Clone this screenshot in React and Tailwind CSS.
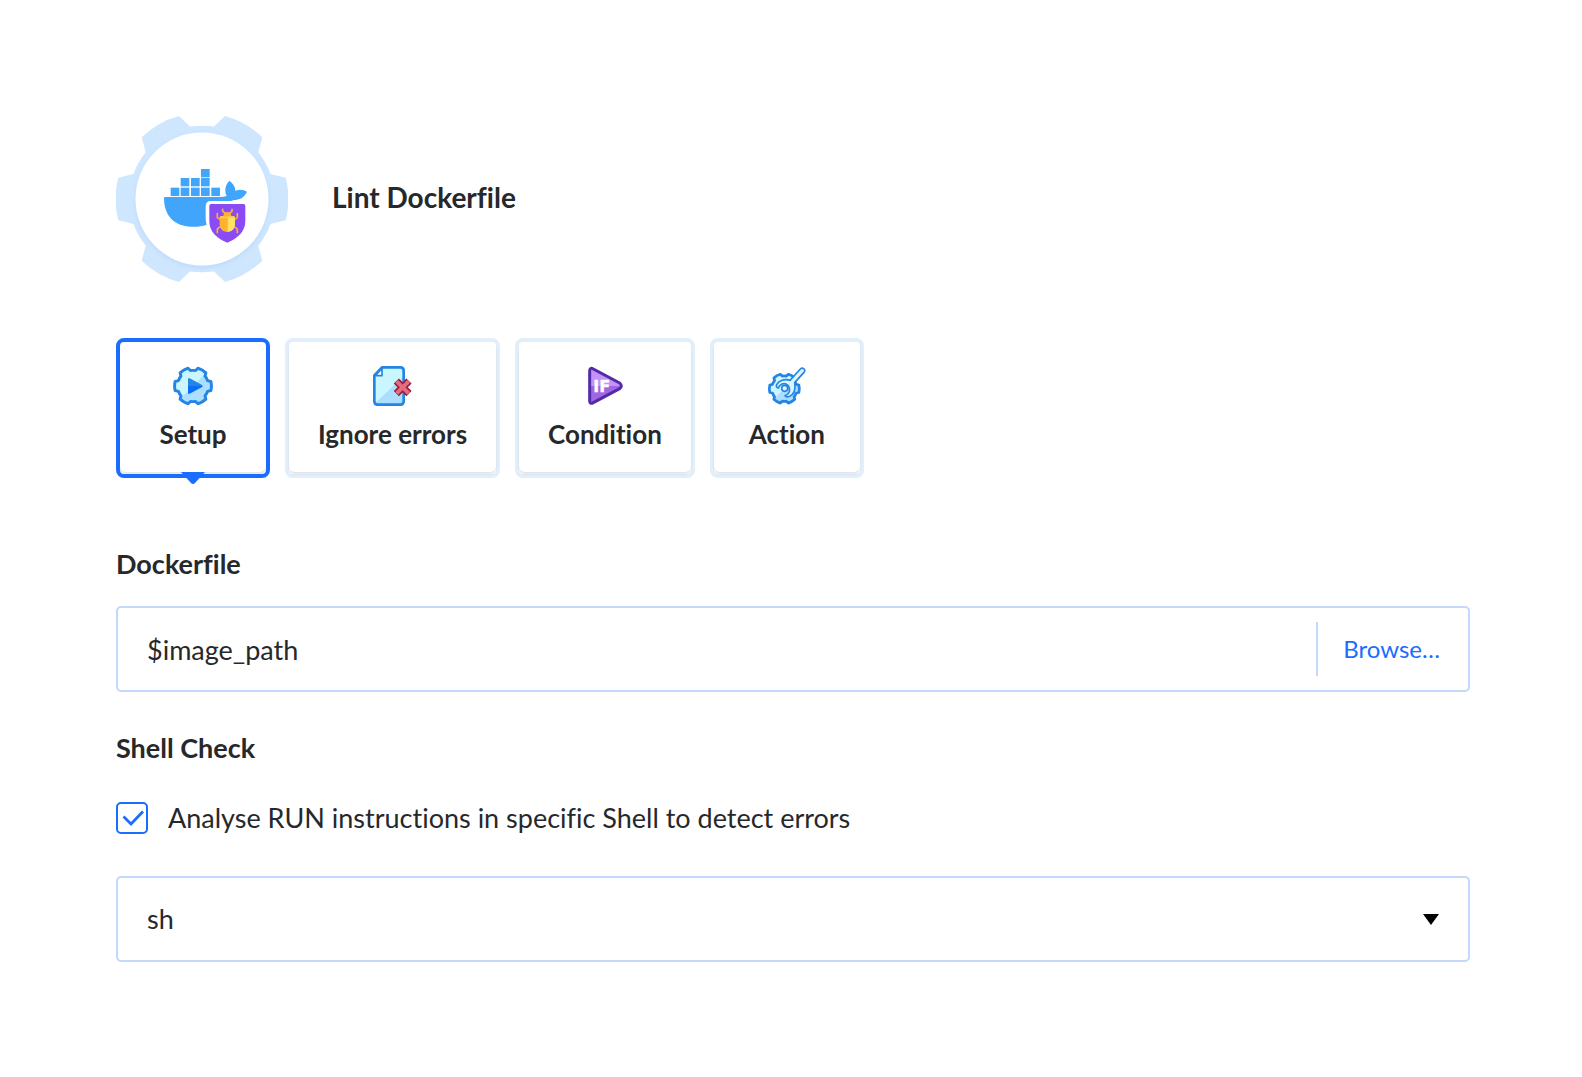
import { useState } from 'react';

// six-tooth gear centred on 0,0
const GEAR =
  'M-23 -83 L-12 -72.5 Q0 -74 12 -72.5 L23 -83 A86 86 0 0 1 60.3 -61.7 L56.3 -46.7 A73 73 0 0 1 68.5 -25 L83.7 -21.3 A86 86 0 0 1 83.7 21.3 L68.5 25 A73 73 0 0 1 56.3 46.7 L60.3 61.7 A86 86 0 0 1 23 83 L12 72.5 Q0 74 -12 72.5 L-23 83 A86 86 0 0 1 -60.3 61.7 L-56.3 46.7 A73 73 0 0 1 -68.5 25 L-83.7 21.3 A86 86 0 0 1 -83.7 -21.3 L-68.5 -25 A73 73 0 0 1 -56.3 -46.7 L-60.3 -61.7 A86 86 0 0 1 -23 -83 Z';

const CRATES = [
  [138, 42],
  [77, 69], [108, 69], [138, 69],
  [47, 98], [77, 98], [108, 98], [138, 98], [169, 98],
];

const Logo = () => (
  <svg viewBox="0 0 172 166" className="h-[166px] w-[172px] shrink-0" aria-hidden="true">
    <defs>
      <filter id="disc" x="-10%" y="-10%" width="120%" height="120%">
        <feDropShadow dx="0" dy="2" stdDeviation="2" floodColor="#7fb2e8" floodOpacity="0.25" />
      </filter>
    </defs>
    <path d={GEAR} transform="translate(86 83)" fill="#cfe6ff" />
    <circle cx="86" cy="83" r="66.5" fill="#fff" filter="url(#disc)" />
    <g transform="translate(39 39) scale(0.33333)">
      <g fill="#41a5fc">
        {CRATES.map(([x, y]) => (
          <rect key={`${x}-${y}`} x={x} y={y} width="26" height="25" />
        ))}
        <path d="M30 126 H190 Q207 126 215 123 C208 108 210 90 223 77 C235 86 241 95 241 107 C254 102 267 104 276 110 C268 128 253 135 236 135 Q232 138 226 138 H168 Q152 138 152 154 V190 Q152 200 155 209 C141 214 125 216 108 215 C58 213 27 182 27 129 Q27 126 30 126 Z" />
      </g>
      <path d="M168 147 H266 Q271 147 271 153 V198 C271 232 245 250 220 262 Q217 264 214 262 C188 250 163 232 163 198 V153 Q163 147 168 147 Z" fill="#8a4bf5" />
      <g fill="none" stroke="#fdb12f" strokeWidth="5" strokeLinecap="round" strokeLinejoin="round">
        <path d="M187 176 V188 Q190 193 197 193 M247 176 V188 Q244 193 237 193 M187 233 V223 Q189 217 198 216 M247 233 V223 Q245 217 236 216" />
        <path d="M203 163 V169 L210 174 M231 163 V169 L224 174" />
      </g>
      <path d="M205 183 Q205 171 217 171 Q229 171 229 183 Z" fill="#fdb12f" />
      <path d="M194 187 Q194 184 198 184 H217 V231 C203 231 194 221 194 208 Z" fill="#fdb12f" />
      <path d="M240 187 Q240 184 236 184 H217 V231 C231 231 240 221 240 208 Z" fill="#ffe361" />
      <path d="M198 184 H236 Q240 184 240 189 H194 Q194 184 198 184 Z" fill="#ffcf4a" />
    </g>
  </svg>
);

const SetupIcon = () => (
  <svg viewBox="27 33 120 120" className="size-10" aria-hidden="true">
    <defs>
      <clipPath id="setup-gear">
        <path d={GEAR} transform="translate(87 93) scale(0.64)" />
      </clipPath>
    </defs>
    <g clipPath="url(#setup-gear)">
      <rect x="27" y="33" width="120" height="120" fill="#c9f6ff" />
      <path d="M147 33 V153 H27 Z" fill="#acdfff" />
    </g>
    <path d={GEAR} transform="translate(87 93) scale(0.64)" fill="none" stroke="#2485e2" strokeWidth="14" strokeLinejoin="round" />
    <path d="M72 93 V73 Q72 68 77 70 L113 89 Q116 91 116 93 Z" fill="#2485e2" />
    <path d="M72 93 V113 Q72 118 77 116 L113 97 Q116 95 116 93 Z" fill="#0a6dfa" />
  </svg>
);

const IgnoreIcon = () => (
  <svg viewBox="27 33 120 120" className="size-10" aria-hidden="true">
    <path d="M54 37 H109 Q119 37 119 47 V139 Q119 149 109 149 H41 Q31 149 31 139 V61 Z" fill="#c9f6ff" />
    <path d="M119 64 V139 Q119 149 109 149 H41 Q36 149 33 145 Z" fill="#acdfff" />
    <path d="M54 37 H109 Q119 37 119 47 V139 Q119 149 109 149 H41 Q31 149 31 139 V61 Z" fill="none" stroke="#2485e2" strokeWidth="8" strokeLinejoin="round" />
    <path d="M54 40 V62 H34 Z" fill="#fff" stroke="#2485e2" strokeWidth="5" strokeLinejoin="round" />
    <path d="M97 78 L135 116 M135 78 L97 116" stroke="#9c1b39" strokeWidth="22" />
    <path d="M98 79 L134 115 M134 79 L98 115" stroke="#e26d7c" strokeWidth="12" />
  </svg>
);

const ConditionIcon = () => (
  <svg viewBox="33 33 120 120" className="size-10" aria-hidden="true">
    <path d="M47 93 V48 Q47 36 58 42 L137 84 Q142 88 142 93 Z" fill="#c393f9" />
    <path d="M47 93 V137 Q47 149 58 143 L137 101 Q142 97 142 93 Z" fill="#a166e2" />
    <path d="M47 48 Q47 36 58 42 L137 84 Q147 93 137 101 L58 143 Q47 149 47 137 Z" fill="none" stroke="#532ba6" strokeWidth="9" strokeLinejoin="round" />
    <text x="58" y="112" fill="#fff" stroke="#fff" strokeWidth="1" className="font-['DejaVu_Sans',sans-serif] text-[48px] font-bold">
      IF
    </text>
  </svg>
);

const ActionIcon = () => (
  <svg viewBox="39 33 120 120" className="size-10" aria-hidden="true">
    <defs>
      <clipPath id="action-gear">
        <path d={GEAR} transform="translate(91 101) scale(0.52)" />
      </clipPath>
    </defs>
    <g clipPath="url(#action-gear)">
      <rect x="39" y="33" width="120" height="120" fill="#c9f6ff" />
      <path d="M151 42 V153 H39 Z" fill="#acdfff" />
    </g>
    <path d={GEAR} transform="translate(91 101) scale(0.52)" fill="none" stroke="#2485e2" strokeWidth="16" strokeLinejoin="round" />
    <path
      d="M139 42 Q144 37 149 41 Q155 46 150 52 L122 83 C125 100 121 117 107 124 Q98 128 93 122 C104 118 108 109 106 99 C104 89 93 83 84 87 Q75 91 73 99 Q65 97 68 89 C75 76 92 71 108 76 Z"
      fill="#dcf5ff"
      stroke="#2485e2"
      strokeWidth="5"
      strokeLinejoin="round"
    />
    <circle cx="92" cy="100" r="9" fill="#dcf5ff" stroke="#2485e2" strokeWidth="5" />
  </svg>
);

const TABS = [
  { id: 'setup', label: 'Setup', Icon: SetupIcon },
  { id: 'ignore', label: 'Ignore errors', Icon: IgnoreIcon },
  { id: 'condition', label: 'Condition', Icon: ConditionIcon },
  { id: 'action', label: 'Action', Icon: ActionIcon },
];

const Tab = ({ label, Icon, active, onClick }) => (
  <button
    type="button"
    role="tab"
    aria-selected={active}
    onClick={onClick}
    className={`relative min-w-[154px] rounded-lg border-4 pb-0.5 ${active ? 'border-[#1a6dff]' : 'border-[#e3eefb]'}`}
  >
    <span className="flex flex-col items-center gap-3 rounded-md px-[29px] pt-6 pb-[22px] shadow-[0_2px_2px_rgba(60,80,110,0.16)]">
      <Icon />
      <span className="text-[26px] leading-8 font-bold">{label}</span>
    </span>
    {active && (
      <svg viewBox="0 0 24 12" className="absolute top-full left-1/2 -mt-0.5 h-3 w-6 -translate-x-1/2" aria-hidden="true">
        <path d="M0 0 H24 L14 11 Q12 13 10 11 Z" fill="#1a6dff" />
      </svg>
    )}
  </button>
);

const App = () => {
  const [tab, setTab] = useState('setup');
  const [path, setPath] = useState('$image_path');
  const [analyse, setAnalyse] = useState(true);
  const [shell, setShell] = useState('sh');

  return (
    <main className="min-h-screen bg-white pt-[116px] pr-28 pb-28 pl-[116px] font-[Lato,sans-serif] text-[#26282b] [font-variant-ligatures:no-common-ligatures]">
      <header className="flex items-center gap-11">
        <Logo />
        <h1 className="pb-1 text-[28px] leading-9 font-bold">Lint Dockerfile</h1>
      </header>

      <div role="tablist" className="mt-14 flex flex-wrap gap-[15px]">
        {TABS.map(({ id, label, Icon }) => (
          <Tab key={id} label={label} Icon={Icon} active={tab === id} onClick={() => setTab(id)} />
        ))}
      </div>

      <form onSubmit={(e) => e.preventDefault()}>
        <label htmlFor="dockerfile" className="mt-[70px] block text-[27px] leading-8 font-bold">
          Dockerfile
        </label>
        <div className="mt-[26px] flex h-[86px] items-center rounded-[5px] border-2 border-[#c4d8f9]">
          <input
            id="dockerfile"
            type="text"
            value={path}
            onChange={(e) => setPath(e.target.value)}
            className="h-full min-w-0 flex-1 bg-transparent px-[29px] text-[27px] outline-none"
          />
          <button type="button" className="h-[54px] border-l-2 border-[#c4d8f9] pr-7 pl-[25px] text-2xl text-[#1a6dff]">
            Browse…
          </button>
        </div>

        <h2 className="mt-10 text-[27px] leading-8 font-bold">Shell Check</h2>
        <label className="mt-[38px] flex items-center gap-5 text-[27px] leading-8">
          <span className="relative size-8">
            <input
              type="checkbox"
              checked={analyse}
              onChange={(e) => setAnalyse(e.target.checked)}
              className="peer block size-8 appearance-none rounded-[5px] border-2 border-[#1a6dff]"
            />
            <svg viewBox="0 0 32 32" className="pointer-events-none absolute inset-0 hidden size-8 peer-checked:block" aria-hidden="true">
              <path d="M7.5 14.5 L15 22 L27 9.5" fill="none" stroke="#1a6dff" strokeWidth="2.8" />
            </svg>
          </span>
          Analyse RUN instructions in specific Shell to detect errors
        </label>

        <div className="relative mt-[42px]">
          <select
            aria-label="Shell"
            value={shell}
            onChange={(e) => setShell(e.target.value)}
            className="block h-[86px] w-full appearance-none rounded-[5px] border-2 border-[#c4d8f9] bg-transparent px-[29px] text-[27px] outline-none"
          >
            <option value="sh">sh</option>
            <option value="bash">bash</option>
            <option value="dash">dash</option>
            <option value="ksh">ksh</option>
          </select>
          <svg viewBox="0 0 16 11" className="pointer-events-none absolute top-[38px] right-[31px] h-[11px] w-4" aria-hidden="true">
            <path d="M0 0 H16 L8 11 Z" fill="#000" />
          </svg>
        </div>
      </form>
    </main>
  );
};

export default App;
